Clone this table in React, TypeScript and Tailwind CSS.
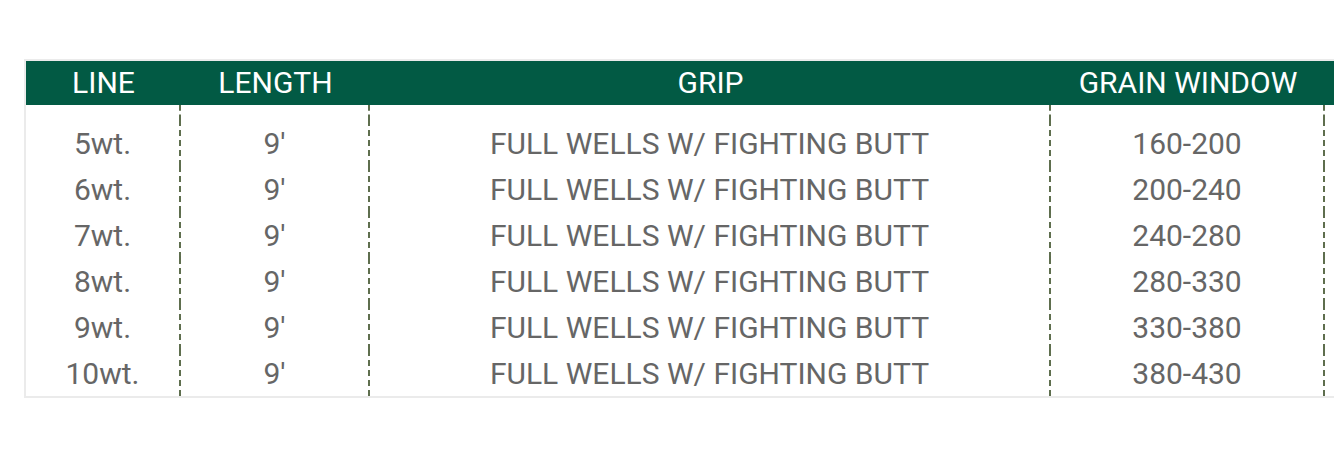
const ROWS = [
  ['5wt.', "9'", 'FULL WELLS W/ FIGHTING BUTT', '160-200'],
  ['6wt.', "9'", 'FULL WELLS W/ FIGHTING BUTT', '200-240'],
  ['7wt.', "9'", 'FULL WELLS W/ FIGHTING BUTT', '240-280'],
  ['8wt.', "9'", 'FULL WELLS W/ FIGHTING BUTT', '280-330'],
  ['9wt.', "9'", 'FULL WELLS W/ FIGHTING BUTT', '330-380'],
  ['10wt.', "9'", 'FULL WELLS W/ FIGHTING BUTT', '380-430'],
]

const cell = 'border-r-2 border-dashed border-[#5e6e4e] p-0 text-center'

export default function App() {
  return (
    <div className="w-[1334px] h-[454px] overflow-hidden bg-white pt-[59px] pl-6" style={{ fontFamily: 'Roboto, "Liberation Sans", sans-serif' }}>
      <div className="w-[1600px] border-2 border-[#ebebeb]">
        <table className="border-separate border-spacing-0 table-fixed">
          <colgroup>
            <col className="w-[155px]" />
            <col className="w-[189px]" />
            <col className="w-[681px]" />
            <col className="w-[274px]" />
            <col className="w-[297px]" />
          </colgroup>
          <thead>
            <tr className="bg-[#025a44] text-white text-[30px] font-normal h-[44px] leading-[44px]">
              <th className="font-normal p-0">LINE</th>
              <th className="font-normal p-0">LENGTH</th>
              <th className="font-normal p-0">GRIP</th>
              <th className="font-normal p-0">GRAIN WINDOW</th>
              <th className="font-normal p-0"></th>
            </tr>
          </thead>
          <tbody className="text-[#666666] text-[30px] leading-[45px]">
            <tr className="h-[15px]">
              <td className={cell + ' leading-[15px]'}></td>
              <td className={cell + ' leading-[15px]'}></td>
              <td className={cell + ' leading-[15px]'}></td>
              <td className={cell + ' leading-[15px]'}></td>
              <td></td>
            </tr>
            {ROWS.map((r) => (
              <tr key={r[0]} className="h-[46px]">
                <td className={cell + ' pt-[1px]'}>{r[0]}</td>
                <td className={cell + ' pt-[1px]'}>{r[1]}</td>
                <td className={cell + ' pt-[1px]'}>{r[2]}</td>
                <td className={cell + ' pt-[1px]'}>{r[3]}</td>
                <td></td>
              </tr>
            ))}
          </tbody>
        </table>
      </div>
    </div>
  )
}
